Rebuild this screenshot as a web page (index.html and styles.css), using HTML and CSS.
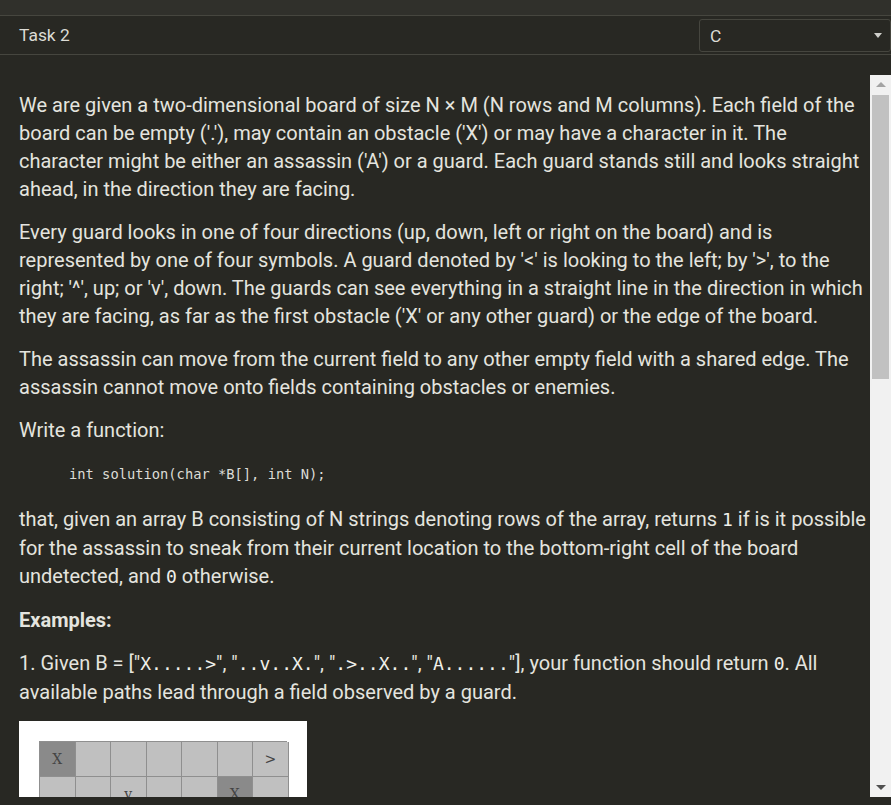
FILE: index.html
```html
<!DOCTYPE html>
<html>
<head>
<meta charset="utf-8">
<link rel="stylesheet" href="styles.css">
</head>
<body>
<div class="topstrip"></div>
<header class="header">
  <div class="title">Task 2</div>
  <div class="select"><span>C</span><span class="caret"></span></div>
</header>
<main class="panel">
  <div class="content">
    <p>We are given a two-dimensional board of size N × M (N rows and M columns). Each field of the board can be empty ('.'), may contain an obstacle ('X') or may have a character in it. The character might be either an assassin ('A') or a guard. Each guard stands still and looks straight ahead, in the direction they are facing.</p>
    <p>Every guard looks in one of four directions (up, down, left or right on the board) and is represented by one of four symbols. A guard denoted by '&lt;' is looking to the left; by '&gt;', to the right; '^', up; or 'v', down. The guards can see everything in a straight line in the direction in which they are facing, as far as the first obstacle ('X' or any other guard) or the edge of the board.</p>
    <p>The assassin can move from the current field to any other empty field with a shared edge. The assassin cannot move onto fields containing obstacles or enemies.</p>
    <p>Write a function:</p>
    <pre class="code">int solution(char *B[], int N);</pre>
    <p>that, given an array B consisting of N strings denoting rows of the array, returns <code>1</code> if is it possible for the assassin to sneak from their current location to the bottom-right cell of the board undetected, and <code>0</code> otherwise.</p>
    <p class="bold">Examples:</p>
    <p>1. Given B = ["<code>X.....&gt;</code>", "<code>..v..X.</code>", "<code>.&gt;..X..</code>", "<code>A......</code>"], your function should return <code>0</code>. All available paths lead through a field observed by a guard.</p>
    <div class="figure">
      <div class="grid">
        <div class="cell dark">X</div><div class="cell"></div><div class="cell"></div><div class="cell"></div><div class="cell"></div><div class="cell"></div><div class="cell">&gt;</div>
        <div class="cell"></div><div class="cell"></div><div class="cell">v</div><div class="cell"></div><div class="cell"></div><div class="cell dark">X</div><div class="cell"></div>
        <div class="cell"></div><div class="cell">&gt;</div><div class="cell"></div><div class="cell"></div><div class="cell dark">X</div><div class="cell"></div><div class="cell"></div>
        <div class="cell">A</div><div class="cell"></div><div class="cell"></div><div class="cell"></div><div class="cell"></div><div class="cell"></div><div class="cell"></div>
      </div>
    </div>
  </div>
  <div class="scrollbar">
    <div class="arrow up"></div>
    <div class="track"><div class="thumb"></div></div>
    <div class="arrow down"></div>
  </div>
</main>
</body>
</html>
```

FILE: styles.css
```css
html, body {
  margin: 0;
  padding: 0;
  background: #282823;
  height: 805px;
  overflow: hidden;
}
body {
  font-family: Roboto, "Liberation Sans", sans-serif;
  color: #e4e4df;
}
.topstrip {
  height: 15px;
  background: #30302b;
  border-bottom: 1px solid #46463f;
}
.header {
  height: 38px;
  border-bottom: 1px solid #46463f;
  display: flex;
  align-items: center;
  justify-content: space-between;
  padding-left: 19px;
}
.title {
  font-size: 17.4px;
  color: #dcdcd6;
}
.select {
  display: flex;
  align-items: center;
  justify-content: space-between;
  padding: 0 8px 0 10px;
  box-sizing: border-box;
  width: 192px;
  height: 33px;
  margin-top: 1px;
  border: 1px solid #46463f;
  border-radius: 3px;
  font-size: 17.4px;
  color: #dcdcd6;
}
.caret {
  width: 0;
  height: 0;
  border-left: 4px solid transparent;
  border-right: 4px solid transparent;
  border-top: 5px solid #cfcfca;
}
.panel {
  margin-top: 20px;
  height: 722px;
  display: flex;
}
.content {
  flex: 1;
  overflow: hidden;
  padding: 16px 2px 0 19px;
  font-size: 20px;
  line-height: 28px;
}
.content p {
  margin: 0 0 15px;
}
.bold {
  font-weight: 700;
}
code {
  font-family: "DejaVu Sans Mono", monospace;
  font-size: 18px;
  line-height: 29px;
  color: #f0f0ea;
}
.code {
  font-family: "DejaVu Sans Mono", monospace;
  font-size: 13.75px;
  line-height: 16px;
  margin: 0 0 23px;
  padding: 7px 0 0 50px;
  color: #dcdcd6;
}
.figure {
  width: 248px;
  background: #fff;
  padding: 20px;
}
.grid {
  display: grid;
  grid-template-columns: repeat(7, 35.5px);
  grid-auto-rows: 35px;
  border-top: 1px solid #8f8f8f;
  border-left: 1px solid #8f8f8f;
}
.cell {
  background: #c0c0c0;
  border-right: 1px solid #8f8f8f;
  border-bottom: 1px solid #8f8f8f;
  display: flex;
  align-items: center;
  justify-content: center;
  font-family: "DejaVu Serif", serif;
  font-size: 14px;
  color: #444;
}
.cell.dark {
  background: #8a8a8a;
}
.scrollbar {
  width: 21px;
  background: #f1f1f1;
  display: flex;
  flex-direction: column;
}
.arrow {
  height: 19px;
  display: flex;
  align-items: center;
  justify-content: center;
}
.arrow.up::after {
  content: "";
  border-left: 5px solid transparent;
  border-right: 5px solid transparent;
  border-bottom: 5px solid #a3a3a3;
}
.arrow.down::after {
  content: "";
  border-left: 5px solid transparent;
  border-right: 5px solid transparent;
  border-top: 5px solid #505050;
}
.track {
  flex: 1;
  padding: 1px 2px;
}
.thumb {
  height: 284px;
  background: #c1c1c1;
}
```
